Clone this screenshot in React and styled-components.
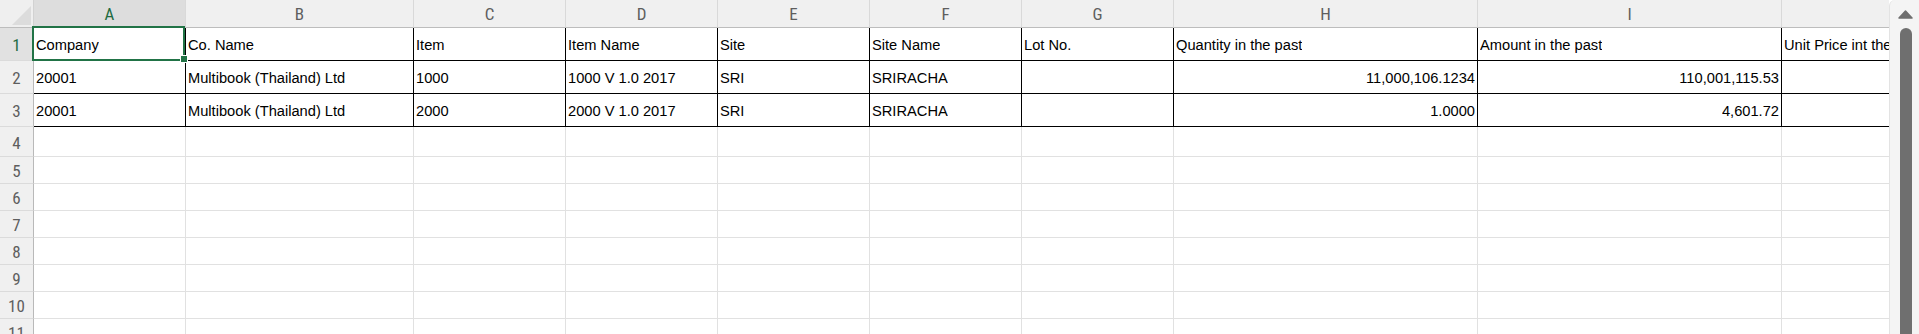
import React from 'react';
import styled, { createGlobalStyle } from 'styled-components';

const GlobalStyle = createGlobalStyle`
  html, body { margin: 0; padding: 0; background: #ffffff; overflow: hidden; }
  #root { height: 334px; }
`;

const TEMPLATE = '34px 152px 228px 152px 152px 152px 152px 152px 304px 304px 304px';
const HEAD_FONT = `"Liberation Sans Narrow", "Roboto Condensed", Roboto, "Noto Sans", sans-serif`;
const CELL_FONT = `"Liberation Sans", Arial, sans-serif`;
const GREEN = '#217346';

const Window = styled.div`
  display: flex;
  width: 1919px;
  height: 334px;
  overflow: hidden;
  background: #ffffff;
`;

const Sheet = styled.div`
  flex: 1;
  min-width: 0;
  display: flex;
  flex-direction: column;
  overflow: hidden;
`;

const Row = styled.div`
  display: grid;
  grid-template-columns: ${TEMPLATE};
  height: ${(p) => p.$height}px;
  flex: none;
`;

const Corner = styled.div`
  box-sizing: border-box;
  background: #efefef;
  border-right: 1px solid #d2d2d2;
  border-bottom: 1px solid #bdbdbd;
  display: flex;
  align-items: flex-end;
  justify-content: flex-end;
  padding: 0 2px 2px 0;
`;

const ColHead = styled.div`
  box-sizing: border-box;
  display: flex;
  align-items: center;
  justify-content: center;
  background: ${(p) => (p.$active ? '#dddddd' : '#f0f0f0')};
  color: ${(p) => (p.$active ? '#1e6b41' : '#5e5e5e')};
  border-right: 1px solid #d9d9d9;
  border-bottom: 1px solid #bdbdbd;
  font-family: ${HEAD_FONT};
  font-size: 17px;
  overflow: hidden;
`;

const RowHead = styled.div`
  box-sizing: border-box;
  display: flex;
  align-items: center;
  justify-content: center;
  padding-top: 2px;
  background: ${(p) => (p.$active ? '#e1e1e1' : '#f0f0f0')};
  color: ${(p) => (p.$active ? '#1e6b41' : '#5e5e5e')};
  border-right: 1px solid #b9b9b9;
  border-bottom: 1px solid #dbdbdb;
  font-family: ${HEAD_FONT};
  font-size: 17px;
`;

const Cell = styled.div`
  box-sizing: border-box;
  position: ${(p) => (p.$selected ? 'relative' : 'static')};
  min-width: 0;
  display: flex;
  align-items: center;
  justify-content: ${(p) => (p.$numeric ? 'flex-end' : 'flex-start')};
  padding: 2px 2px 0 2px;
  border-right: 1px solid ${(p) => (p.$ruled ? '#000000' : '#e1e1e1')};
  border-bottom: 1px solid ${(p) => (p.$ruled ? '#000000' : '#e1e1e1')};
  background: transparent;
  font-family: ${CELL_FONT};
  font-size: 11pt;
  color: #000000;
`;

const CellText = styled.span`
  display: block;
  white-space: nowrap;
  overflow: hidden;
  min-width: 0;
`;

const Selection = styled.div`
  position: absolute;
  top: -2px;
  left: -2px;
  right: 0;
  bottom: -1px;
  border: 2px solid ${GREEN};
  pointer-events: none;
  z-index: 2;
`;

const FillHandle = styled.div`
  position: absolute;
  right: -2px;
  bottom: -2px;
  width: 6px;
  height: 6px;
  background: ${GREEN};
  box-shadow: 0 0 0 1px #ffffff;
  z-index: 3;
`;

const ScrollBar = styled.div`
  width: 30px;
  flex: none;
  box-sizing: border-box;
  background: #f4f4f4;
  border-left: 1px solid #e3e3e3;
  border-top-left-radius: 6px;
  display: flex;
  flex-direction: column;
  align-items: center;
  padding: 10px 0 0 2px;
`;

const ArrowUp = styled.svg`
  display: block;
  flex: none;
`;

const Thumb = styled.div`
  margin-top: 9px;
  width: 12px;
  flex: 1;
  background: #6f6f6f;
  border-radius: 6px 6px 0 0;
`;

const COLUMNS = ['A', 'B', 'C', 'D', 'E', 'F', 'G', 'H', 'I', 'J'];

const DATA = [
  {
    n: 1,
    h: 33,
    ruled: true,
    cells: ['Company', 'Co. Name', 'Item', 'Item Name', 'Site', 'Site Name', 'Lot No.', 'Quantity in the past', 'Amount in the past', 'Unit Price int the past'],
    numeric: [],
  },
  {
    n: 2,
    h: 33,
    ruled: true,
    cells: ['20001', 'Multibook (Thailand) Ltd', '1000', '1000 V 1.0 2017', 'SRI', 'SRIRACHA', '', '11,000,106.1234', '110,001,115.53', ''],
    numeric: [7, 8],
  },
  {
    n: 3,
    h: 33,
    ruled: true,
    cells: ['20001', 'Multibook (Thailand) Ltd', '2000', '2000 V 1.0 2017', 'SRI', 'SRIRACHA', '', '1.0000', '4,601.72', ''],
    numeric: [7, 8],
  },
  { n: 4, h: 30 },
  { n: 5, h: 27 },
  { n: 6, h: 27 },
  { n: 7, h: 27 },
  { n: 8, h: 27 },
  { n: 9, h: 27 },
  { n: 10, h: 27 },
  { n: 11, h: 27 },
];

function HeaderRow() {
  return (
    <Row $height={28}>
      <Corner>
        <svg width="19" height="19" viewBox="0 0 19 19">
          <polygon points="0,19 19,19 19,0" fill="#dcdcdc" />
        </svg>
      </Corner>
      {COLUMNS.map((c) => (
        <ColHead key={c} $active={c === 'A'}>
          {c}
        </ColHead>
      ))}
    </Row>
  );
}

function DataRow({ row }) {
  const ruled = !!row.ruled;
  return (
    <Row $height={row.h}>
      <RowHead $active={row.n === 1}>{row.n}</RowHead>
      {COLUMNS.map((c, i) => {
        const text = row.cells ? row.cells[i] : '';
        const selected = row.n === 1 && i === 0;
        return (
          <Cell
            key={c}
            $ruled={ruled}
            $numeric={row.numeric ? row.numeric.includes(i) : false}
            $selected={selected}
          >
            {text ? <CellText>{text}</CellText> : null}
            {selected && (
              <>
                <Selection />
                <FillHandle />
              </>
            )}
          </Cell>
        );
      })}
    </Row>
  );
}

export default function App() {
  return (
    <>
      <GlobalStyle />
      <Window>
        <Sheet>
          <HeaderRow />
          {DATA.map((r) => (
            <DataRow key={r.n} row={r} />
          ))}
        </Sheet>
        <ScrollBar>
          <ArrowUp width="15" height="9" viewBox="0 0 15 9">
            <polygon
              points="7.5,1 14,8 1,8"
              fill="#6f6f6f"
              stroke="#6f6f6f"
              strokeWidth="1.5"
              strokeLinejoin="round"
            />
          </ArrowUp>
          <Thumb />
        </ScrollBar>
      </Window>
    </>
  );
}
